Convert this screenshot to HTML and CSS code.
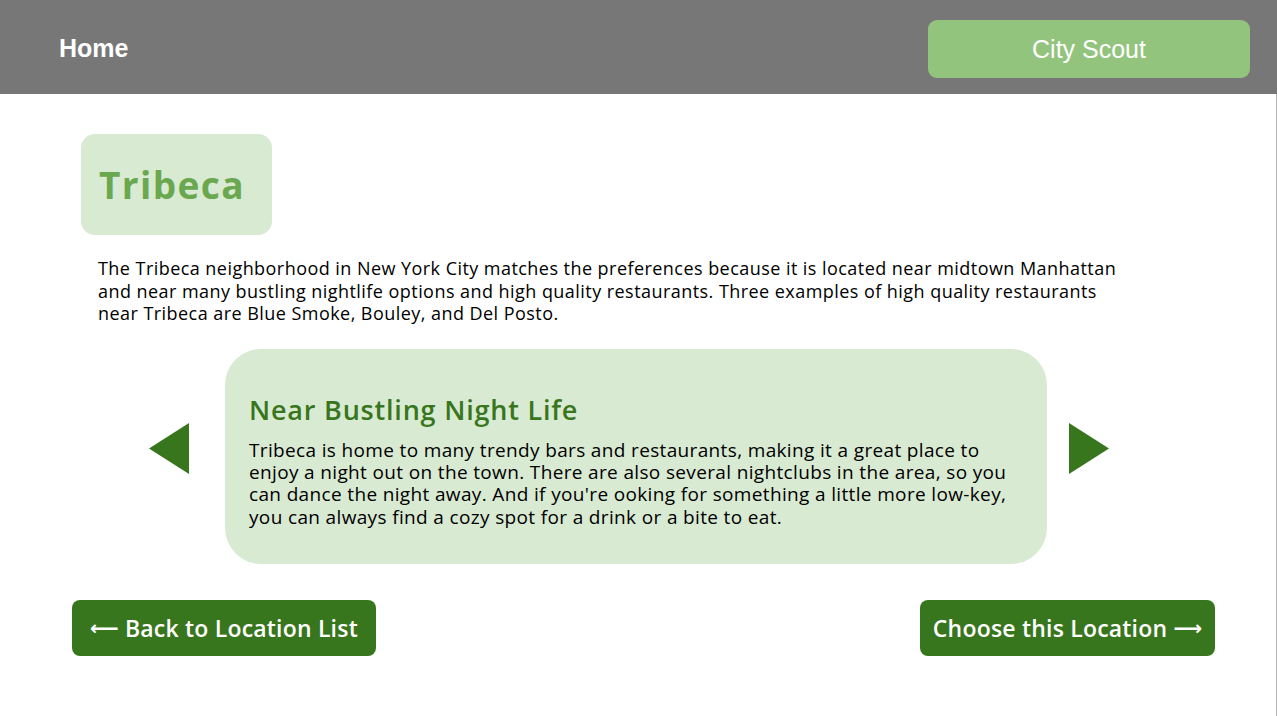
FILE: index.html
```html
<!DOCTYPE html>
<html lang="en">
<head>
<meta charset="utf-8">
<title>City Scout – Tribeca</title>
<link rel="stylesheet" href="styles.css">
</head>
<body>
<header class="topbar">
  <a class="home" href="#">Home</a>
  <div class="brand">City Scout</div>
</header>
<main class="page">
  <div class="title-box"><h1>Tribeca</h1></div>
  <p class="intro">The Tribeca neighborhood in New York City matches the preferences because it is located near midtown Manhattan and near many bustling nightlife options and high quality restaurants. Three examples of high quality restaurants near Tribeca are Blue Smoke, Bouley, and Del Posto.</p>
  <section class="carousel">
    <button class="arrow" aria-label="Previous">
      <svg width="40" height="51" viewBox="0 0 40 51"><polygon points="40,0 40,51 0,25.5" fill="#38761d"/></svg>
    </button>
    <div class="card">
      <h2>Near Bustling Night Life</h2>
      <p>Tribeca is home to many trendy bars and restaurants, making it a great place to enjoy a night out on the town. There are also several nightclubs in the area, so you can dance the night away. And if you're ooking for something a little more low-key, you can always find a cozy spot for a drink or a bite to eat.</p>
    </div>
    <button class="arrow" aria-label="Next">
      <svg width="40" height="51" viewBox="0 0 40 51"><polygon points="0,0 0,51 40,25.5" fill="#38761d"/></svg>
    </button>
  </section>
  <div class="actions">
    <a class="btn btn-back" href="#"><span class="arr">&#x27F5;</span> Back to Location List</a>
    <a class="btn btn-choose" href="#">Choose this Location <span class="arr">&#x27F6;</span></a>
  </div>
</main>
</body>
</html>
```
FILE: styles.css
```css
* { box-sizing: border-box; }
html, body { margin: 0; padding: 0; background: #fff; }
body { font-family: "Open Sans", "Noto Sans", sans-serif; color: #000; }

.topbar {
  height: 94px;
  background: #777777;
  display: flex;
  align-items: center;
  justify-content: space-between;
  padding: 0 27px 0 59px;
}
.home {
  font-family: "Liberation Sans", Arial, sans-serif;
  font-weight: bold;
  font-size: 25px;
  color: #fff;
  text-decoration: none;
  margin-top: 3px;
}
.brand {
  width: 322px;
  height: 58px;
  background: #93c47d;
  border-radius: 9px;
  color: #fff;
  font-family: "Liberation Sans", Arial, sans-serif;
  font-size: 25px;
  display: flex;
  align-items: center;
  justify-content: center;
  margin-top: 4px;
}

.page {
  width: 1277px;
  min-height: 622px;
  border-right: 1px solid #b7b7b7;
  padding-top: 40px;
}
.title-box {
  margin-left: 81px;
  width: 191px;
  height: 101px;
  background: #d9ead3;
  border-radius: 14px;
  display: flex;
  align-items: center;
  padding-left: 18px;
}
.title-box h1 {
  margin: 0;
  font-size: 37px;
  font-weight: 700;
  letter-spacing: 1.4px;
  color: #6aa84f;
  line-height: 1;
}
.intro {
  margin: 22px 0 0 98px;
  width: 1026px;
  font-size: 18px;
  letter-spacing: 0.45px;
  line-height: 22.5px;
}
.carousel {
  margin-top: 24px;
  display: flex;
  align-items: center;
  padding-left: 149px;
}
.arrow {
  border: 0;
  background: none;
  padding: 0;
  width: 40px;
  height: 51px;
  display: block;
  margin-bottom: 16px;
}
.arrow svg { display: block; }
.card {
  margin: 0 22px 0 36px;
  width: 822px;
  height: 215px;
  background: #d9ead3;
  border-radius: 36px;
  padding: 44px 24px 0 24px;
}
.card h2 {
  margin: 0;
  font-size: 27px;
  font-weight: 600;
  letter-spacing: 0.8px;
  color: #38761d;
  line-height: 34px;
}
.card p {
  margin: 12px 0 0;
  font-size: 19px;
  letter-spacing: 0.35px;
  line-height: 22.4px;
  width: 760px;
}
.actions {
  margin-top: 36px;
  display: flex;
  justify-content: space-between;
  padding: 0 61px 0 72px;
}
.btn {
  height: 56px;
  background: #38761d;
  color: #fff;
  border-radius: 8px;
  font-size: 23px;
  font-weight: 600;
  letter-spacing: 0.2px;
  text-decoration: none;
  display: flex;
  align-items: center;
  justify-content: center;
  white-space: pre;
}
.btn-back { width: 304px; }
.btn-choose { width: 295px; }
.arr { font-family: "DejaVu Sans", sans-serif; font-size: 20px; letter-spacing: 0; }
```
